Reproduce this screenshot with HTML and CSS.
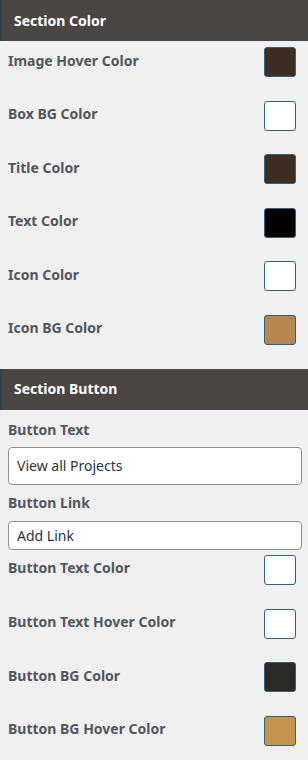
FILE: index.html
```html
<!DOCTYPE html>
<html>
<head>
<meta charset="utf-8">
<link rel="stylesheet" href="styles.css">
</head>
<body>
<div class="panel">
  <div class="section-head">Section Color</div>
  <div class="rows rows-color">
    <div class="row"><span class="label">Image Hover Color</span><span class="swatch" style="background:#3d2e24"></span></div>
    <div class="row"><span class="label">Box BG Color</span><span class="swatch" style="background:#ffffff"></span></div>
    <div class="row"><span class="label">Title Color</span><span class="swatch" style="background:#3d2e24"></span></div>
    <div class="row"><span class="label">Text Color</span><span class="swatch" style="background:#000000"></span></div>
    <div class="row"><span class="label">Icon Color</span><span class="swatch" style="background:#ffffff"></span></div>
    <div class="row"><span class="label">Icon BG Color</span><span class="swatch" style="background:#b5874f"></span></div>
  </div>
  <div class="section-head">Section Button</div>
  <div class="fields">
    <div class="field-label first">Button Text</div>
    <div class="input tall">View all Projects</div>
    <div class="field-label">Button Link</div>
    <div class="input short">Add Link</div>
  </div>
  <div class="rows rows-button">
    <div class="row"><span class="label">Button Text Color</span><span class="swatch" style="background:#ffffff"></span></div>
    <div class="row"><span class="label">Button Text Hover Color</span><span class="swatch" style="background:#ffffff"></span></div>
    <div class="row"><span class="label">Button BG Color</span><span class="swatch" style="background:#2b2a28"></span></div>
    <div class="row"><span class="label">Button BG Hover Color</span><span class="swatch" style="background:#c49350"></span></div>
  </div>
</div>
</body>
</html>
```
FILE: styles.css
```css
html, body {
  margin: 0;
  padding: 0;
  background: #f0f0f0;
}
body {
  font-family: "Noto Sans", "Open Sans", sans-serif;
  width: 308px;
  height: 760px;
  overflow: hidden;
}
.panel {
  display: flex;
  flex-direction: column;
}
.section-head {
  height: 41px;
  box-sizing: border-box;
  background: #4b4644;
  border-left: 2px solid #2e4457;
  color: #ffffff;
  font-weight: 700;
  font-size: 14px;
  display: flex;
  align-items: center;
  padding-left: 12px;
  padding-bottom: 1px;
}
.rows {
  display: flex;
  flex-direction: column;
  gap: 23.6px;
  padding: 0 12px 0 8px;
}
.rows-color {
  padding-top: 6px;
  padding-bottom: 24px;
}
.rows-button {
  padding-top: 5px;
}
.row {
  display: flex;
  justify-content: space-between;
  align-items: center;
  height: 30px;
}
.label {
  color: #50575e;
  font-weight: 700;
  font-size: 14px;
  line-height: 18px;
  padding-bottom: 3px;
}
.swatch {
  width: 32px;
  height: 30px;
  box-sizing: border-box;
  border: 1px solid #33607f;
  border-radius: 3px;
}
.fields {
  display: flex;
  flex-direction: column;
  padding: 0 6px 0 8px;
}
.field-label {
  color: #50575e;
  font-weight: 700;
  font-size: 14px;
  line-height: 18px;
  margin-top: 9px;
  margin-bottom: 9px;
}
.field-label.first {
  margin-top: 11px;
  margin-bottom: 8px;
}
.input {
  box-sizing: border-box;
  background: #ffffff;
  border: 1px solid #8c8f94;
  border-radius: 4px;
  color: #2c3338;
  font-size: 14px;
  padding-left: 8px;
  display: flex;
  align-items: center;
}
.input.tall {
  height: 38px;
}
.input.short {
  height: 29px;
}
```
